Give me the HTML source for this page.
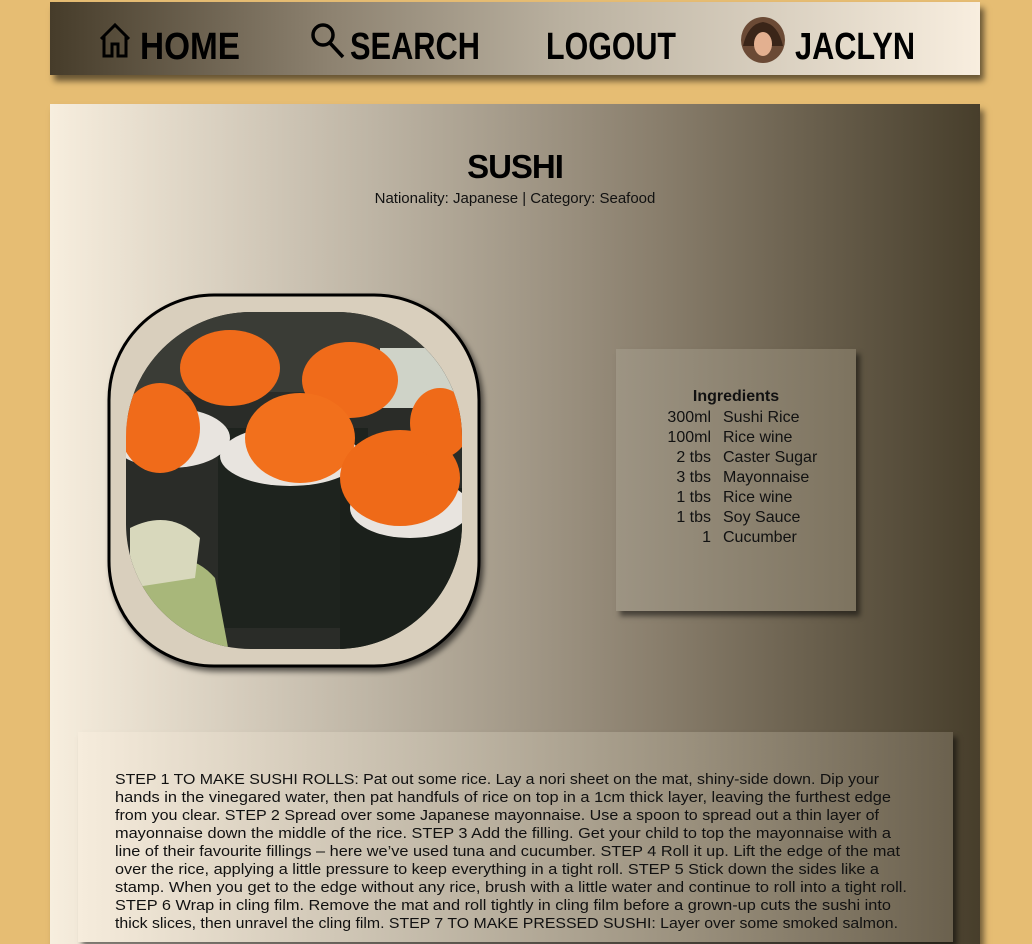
<!DOCTYPE html>
<html><head><meta charset="utf-8"><style>
*{margin:0;padding:0;box-sizing:border-box}
html,body{width:1032px;height:934px;overflow:hidden;background:#e6bd73;font-family:"Liberation Sans",sans-serif}
.nav{position:absolute;left:50px;top:2px;width:930px;height:73px;background:linear-gradient(90deg,#463c2a,#8d8270 30%,#b9b09f 55%,#f8eedf);box-shadow:4px 6px 6px rgba(0,0,0,.55)}
.main{position:absolute;left:50px;top:104px;width:930px;height:840px;background:linear-gradient(90deg,#f7eede,#bdb4a4 35%,#8a7f6d 65%,#473e2b);box-shadow:4px 6px 6px rgba(0,0,0,.5)}
h1{position:absolute;left:0;width:1030px;top:148px;text-align:center;font-size:33px;font-weight:900;letter-spacing:-1px}
.sub{position:absolute;left:0;width:1030px;top:190px;text-align:center;font-size:15px;color:#111}
.ing{position:absolute;left:616px;top:349px;width:240px;height:262px;background:linear-gradient(90deg,#9d9483,#7d735f);box-shadow:4px 5px 5px rgba(0,0,0,.5);font-size:16px;color:#111}
.steps{position:absolute;left:78px;top:732px;width:875px;height:210px;background:linear-gradient(90deg,#f6ecdc,#c3baa9 40%,#9a907d 70%,#6b614e);box-shadow:4px 5px 5px rgba(0,0,0,.5)}
</style></head><body>
<div class="nav">
<svg style="position:absolute;left:48px;top:20px" width="34" height="36" viewBox="0 0 34 36" fill="none" stroke="#000" stroke-width="3"><path d="M3 17 L17 3 L31 17 M6 14 V34 H14 V22 H20 V34 H28 V14"/></svg>
<svg style="position:absolute;left:260px;top:20px" width="38" height="38" viewBox="0 0 38 38" fill="none" stroke="#000" stroke-width="3.5"><circle cx="13" cy="13" r="10"/><path d="M20 21 L33 35"/></svg>
<svg style="position:absolute;left:690px;top:14px" width="46" height="48" viewBox="0 0 46 48"><ellipse cx="23" cy="24" rx="22" ry="23" fill="#6b4a35"/><path d="M3 30 Q8 8 23 6 Q38 8 43 30" fill="#3a2518"/><ellipse cx="23" cy="28" rx="9" ry="12" fill="#e3b090"/></svg>
<svg style="position:absolute;left:0;top:0" width="930" height="73" font-family="Liberation Sans, sans-serif" font-weight="900" font-size="38" fill="#000">
<text x="90" y="57" textLength="100" lengthAdjust="spacingAndGlyphs" style="text-transform:uppercase">Home</text>
<text x="300" y="57" textLength="130" lengthAdjust="spacingAndGlyphs" style="text-transform:uppercase">Search</text>
<text x="496" y="57" textLength="130" lengthAdjust="spacingAndGlyphs" style="text-transform:uppercase">Logout</text>
<text x="745" y="57" textLength="120" lengthAdjust="spacingAndGlyphs" style="text-transform:uppercase">Jaclyn</text>
</svg>
</div>
<div class="main"></div>
<h1>SUSHI</h1>
<div class="sub">Nationality: Japanese | Category: Seafood</div>
<svg style="position:absolute;left:100px;top:288px" width="395" height="390" viewBox="0 0 395 390">
<defs><clipPath id="c"><rect x="26" y="24" width="336" height="337" rx="125"/></clipPath>
<filter id="s"><feDropShadow dx="3" dy="4" stdDeviation="3" flood-opacity=".6"/></filter></defs>
<rect x="9" y="7" width="370" height="371" rx="105" fill="#d9cfbd" stroke="#000" stroke-width="3" filter="url(#s)"/>
<g clip-path="url(#c)">
<rect x="26" y="24" width="336" height="337" fill="#2a2c28"/>
<rect x="26" y="24" width="336" height="80" fill="#3a3c36"/>
<rect x="280" y="60" width="90" height="60" fill="#cfd3c8"/>
<rect x="118" y="140" width="150" height="200" fill="#1e231e"/>
<rect x="240" y="200" width="130" height="180" fill="#1b201b"/>
<ellipse cx="190" cy="168" rx="70" ry="30" fill="#e8e4df"/>
<ellipse cx="310" cy="220" rx="60" ry="30" fill="#e8e4df"/>
<ellipse cx="70" cy="150" rx="60" ry="30" fill="#e8e4df"/>
<ellipse cx="130" cy="80" rx="50" ry="38" fill="#f06b1a"/>
<ellipse cx="250" cy="92" rx="48" ry="38" fill="#f06b1a"/>
<ellipse cx="200" cy="150" rx="55" ry="45" fill="#f2701c"/>
<ellipse cx="300" cy="190" rx="60" ry="48" fill="#ef6a18"/>
<ellipse cx="60" cy="140" rx="40" ry="45" fill="#f06b1a"/>
<ellipse cx="340" cy="135" rx="30" ry="35" fill="#ef6a18"/>
<path d="M40 300 Q80 250 115 290 L130 370 L35 370Z" fill="#a8b77a"/>
<path d="M30 240 Q70 220 100 250 L95 290 L30 300Z" fill="#d8d8bc"/>
</g>
</svg>
<div class="ing">
<div style="position:absolute;top:39px;left:0;width:240px;text-align:center;font-weight:bold">Ingredients</div>
<div style="position:absolute;top:59px;left:0;width:95px;text-align:right;line-height:20px">300ml<br>100ml<br>2 tbs<br>3 tbs<br>1 tbs<br>1 tbs<br>1</div>
<div style="position:absolute;top:59px;left:107px;line-height:20px;white-space:nowrap">Sushi Rice<br>Rice wine<br>Caster Sugar<br>Mayonnaise<br>Rice wine<br>Soy Sauce<br>Cucumber</div>
</div>
<div class="steps"></div>
<svg style="position:absolute;left:0;top:760px" width="1032" height="174" font-family="Liberation Sans, sans-serif" font-size="15" fill="#111">
<text x="115" y="24" textLength="764" lengthAdjust="spacingAndGlyphs">STEP 1 TO MAKE SUSHI ROLLS: Pat out some rice. Lay a nori sheet on the mat, shiny-side down. Dip your</text>
<text x="115" y="42" textLength="776" lengthAdjust="spacingAndGlyphs">hands in the vinegared water, then pat handfuls of rice on top in a 1cm thick layer, leaving the furthest edge</text>
<text x="115" y="60" textLength="764" lengthAdjust="spacingAndGlyphs">from you clear. STEP 2 Spread over some Japanese mayonnaise. Use a spoon to spread out a thin layer of</text>
<text x="115" y="78" textLength="776" lengthAdjust="spacingAndGlyphs">mayonnaise down the middle of the rice. STEP 3 Add the filling. Get your child to top the mayonnaise with a</text>
<text x="115" y="96" textLength="785" lengthAdjust="spacingAndGlyphs">line of their favourite fillings – here we’ve used tuna and cucumber. STEP 4 Roll it up. Lift the edge of the mat</text>
<text x="115" y="114" textLength="764" lengthAdjust="spacingAndGlyphs">over the rice, applying a little pressure to keep everything in a tight roll. STEP 5 Stick down the sides like a</text>
<text x="115" y="132" textLength="792" lengthAdjust="spacingAndGlyphs">stamp. When you get to the edge without any rice, brush with a little water and continue to roll into a tight roll.</text>
<text x="115" y="150" textLength="776" lengthAdjust="spacingAndGlyphs">STEP 6 Wrap in cling film. Remove the mat and roll tightly in cling film before a grown-up cuts the sushi into</text>
<text x="115" y="168" textLength="783" lengthAdjust="spacingAndGlyphs">thick slices, then unravel the cling film. STEP 7 TO MAKE PRESSED SUSHI: Layer over some smoked salmon.</text>
</svg>
</body></html>
